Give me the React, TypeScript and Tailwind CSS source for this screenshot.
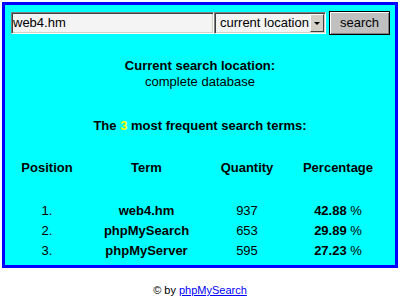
import React from 'react';

// top search terms, as listed on the stats page
const rows = [
  { pos: '1.', term: 'web4.hm', qty: '937', pct: '42.88' },
  { pos: '2.', term: 'phpMySearch', qty: '653', pct: '29.89' },
  { pos: '3.', term: 'phpMyServer', qty: '595', pct: '27.23' },
];

const cols = 'grid grid-cols-[84px_115px_86px_96px] text-center leading-[20px] h-[20px]';

export default function App() {
  return (
    <div className="w-[400px] h-[300px] bg-white pt-[2px] pl-[2px] text-[13px] text-black font-['Liberation_Sans',Arial,sans-serif]">
      <div className="w-[396px] h-[266px] border-[3px] border-[#0000ff] bg-[#00ffff] flex flex-col">
        {/* search form */}
        <div className="flex items-center mt-[6px] ml-[6px] h-[24px]">
          <div className="w-[203px] h-[22px] bg-[#f4f4f4] border border-t-[#808080] border-l-[#808080] border-b-white border-r-white shadow-[inset_1px_1px_0_#404040,inset_-1px_-1px_0_#d4d0c8] pl-[1px] leading-[20px]">
            web4.hm
          </div>
          <div className="w-[112px] h-[22px] bg-[#f4f4f4] border border-t-[#808080] border-l-[#808080] border-b-white border-r-white shadow-[inset_1px_1px_0_#404040,inset_-1px_-1px_0_#d4d0c8] flex items-stretch p-[1px]">
            <span className="flex-1 pl-[4px] leading-[18px] whitespace-nowrap overflow-hidden">current location</span>
            <span className="w-[14px] bg-[#d4d0c8] border border-t-white border-l-white border-b-[#404040] border-r-[#404040] flex items-center justify-center">
              <span className="w-0 h-0 border-l-[3px] border-r-[3px] border-t-[3px] border-l-transparent border-r-transparent border-t-black" />
            </span>
          </div>
          <div className="ml-[3px] w-[61px] h-[24px] border border-black bg-[#c0c0c0] shadow-[inset_1px_1px_0_#ffffff,inset_-1px_-1px_0_#808080] flex items-center justify-center leading-[20px]">
            search
          </div>
        </div>

        {/* current location */}
        <div className="mt-[23px] text-center leading-[16px]">
          <div className="font-bold">Current search location:</div>
          <div>complete database</div>
        </div>

        <div className="mt-[26px] text-center leading-[20px] font-bold">
          The <span className="text-[#ffff00]">3</span> most frequent search terms:
        </div>

        {/* table */}
        <div className={`${cols} mt-[22px] font-bold`}>
          <div>Position</div>
          <div>Term</div>
          <div>Quantity</div>
          <div>Percentage</div>
        </div>
        <div className="mt-[23px]">
          {rows.map((r) => (
            <div key={r.pos} className={cols}>
              <div>{r.pos}</div>
              <div className="font-bold">{r.term}</div>
              <div>{r.qty}</div>
              <div>
                <span className="font-bold">{r.pct}</span> %
              </div>
            </div>
          ))}
        </div>
      </div>

      <div className="mt-[16px] text-center text-[11px] leading-[13px] pr-[2px]">
        © by <a href="#" className="text-[#0000ff] underline">phpMySearch</a>
      </div>
    </div>
  );
}
